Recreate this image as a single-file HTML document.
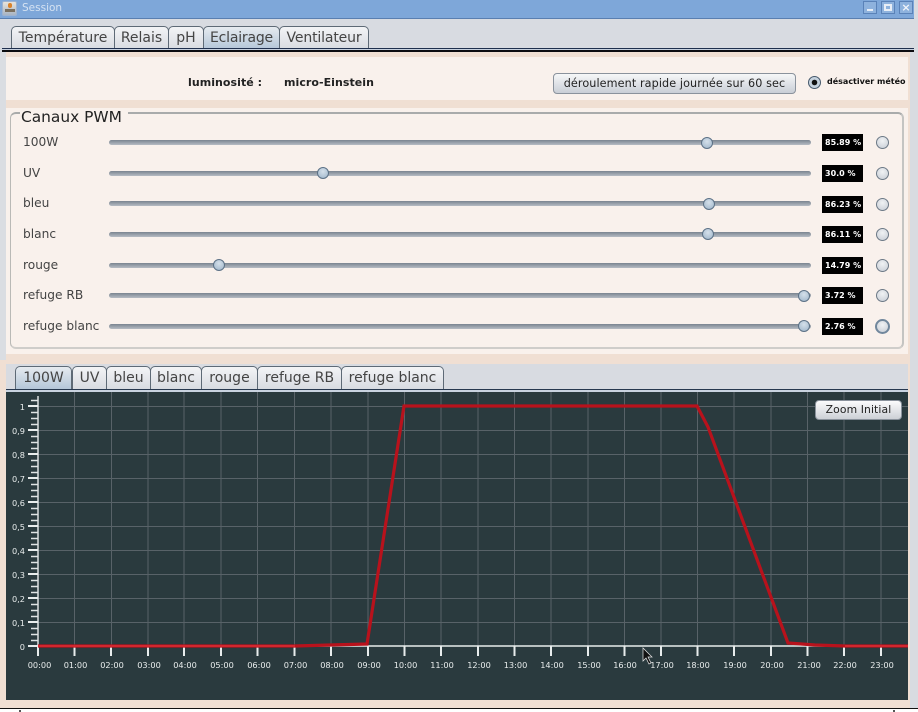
<!DOCTYPE html>
<html><head><meta charset="utf-8"><title>Session</title>
<style>
html,body{margin:0;padding:0;background:#fff}
#w{position:relative;width:918px;height:712px;overflow:hidden;background:#d8dbe1;font-family:"DejaVu Sans",sans-serif;color:#222}
#w div{position:absolute;box-sizing:border-box}
.tab{top:26px;height:23px;border:1px solid #5e6a76;border-bottom:none;border-radius:5px 5px 0 0;background:linear-gradient(#f3f4f6,#d8dbe1);font-size:14px;line-height:23px;text-align:center;color:#444;white-space:nowrap}
.sel{background:linear-gradient(#e6ebf0,#b4c6d8)}
.t2{top:366px}
.lab{left:23px;font-size:12.2px;line-height:14px;color:#444;white-space:nowrap}
.tr{left:109px;width:702px;height:5px;border-radius:3px;background:linear-gradient(#7a8490,#b6bcc3)}
.th{width:12px;height:12px;border-radius:50%;border:1px solid #5c7186;background:radial-gradient(circle at 50% 35%,#d5e0ea,#9db4c9)}
.v{left:822px;width:41px;height:17px;background:#000;color:#fff;font:bold 8px/18px "DejaVu Sans",sans-serif;padding-left:3px;white-space:nowrap}
.r{left:876px;width:13px;height:13px;border-radius:50%;border:1px solid #6c7986;background:radial-gradient(circle at 50% 35%,#f0f2f4,#c6ccd4)}
svg text{font-family:"DejaVu Sans",sans-serif;fill:#e8ecec;font-size:8.2px}
</style></head><body>
<div id="w">
<div style="left:0;top:0;width:918px;height:19px;background:#7ea7d9;border-bottom:1px solid #5a7fb0"></div>
<div style="left:2px;top:1px;width:15px;height:15px;background:linear-gradient(#e8e4dc,#a8b4c4);border-radius:2px;border:1px solid #9fb3cf"></div>
<div style="left:8px;top:3px;width:4px;height:5px;background:#d9822b;border-radius:2px"></div>
<div style="left:5px;top:9px;width:10px;height:3px;background:#7a7060"></div>
<div style="left:22px;top:1px;font-size:10.5px;line-height:14px;color:#d5e2f2">Session</div>
<div style="left:863px;top:1px;width:14px;height:13px;border:1px solid #5a82b8;background:#8eb2dd"></div>
<div style="left:867px;top:9px;width:6px;height:2px;background:#e8eef6"></div>
<div style="left:881px;top:1px;width:14px;height:13px;border:1px solid #5a82b8;background:#8eb2dd"></div>
<div style="left:884px;top:4px;width:8px;height:7px;border:2px solid #e8eef6"></div>
<div style="left:899px;top:1px;width:14px;height:13px;border:1px solid #5a82b8;background:#8eb2dd;color:#f2f5fa;font:bold 11px/12px 'DejaVu Sans',sans-serif;text-align:center">×</div>
<div style="left:914px;top:0;width:4px;height:712px;background:#d8dbe1"></div>

<div class="tab" style="left:11px;width:104px">Température</div>
<div class="tab" style="left:114px;width:55px">Relais</div>
<div class="tab" style="left:168px;width:36px">pH</div>
<div class="tab sel" style="left:203px;width:77px;letter-spacing:-.2px">Eclairage</div>
<div class="tab" style="left:279px;width:90px;letter-spacing:-.15px">Ventilateur</div>
<div style="left:2px;top:48px;width:912px;height:1px;background:#1f2f4d"></div>
<div style="left:2px;top:49px;width:912px;height:1px;background:#c8d2e0"></div>
<div style="left:2px;top:50px;width:912px;height:2px;background:#0c0c10"></div>

<div style="left:0;top:52px;width:6px;height:312px;background:#dadde2"></div>
<div style="left:6px;top:52px;width:904px;height:308px;background:#f0dfd3"></div>
<div style="left:6px;top:57px;width:902px;height:43px;background:#f9f1ec"></div>
<div style="left:6px;top:108px;width:902px;height:246px;background:#f9f1ec"></div>
<div style="left:188px;top:76px;font:bold 11px/14px 'DejaVu Sans',sans-serif;letter-spacing:.05px;color:#222;white-space:nowrap">luminosité :</div>
<div style="left:284px;top:76px;font:bold 11px/14px 'DejaVu Sans',sans-serif;letter-spacing:.05px;color:#222;white-space:nowrap">micro-Einstein</div>
<div style="left:553px;top:73px;width:243px;height:21px;border:1px solid #8a929c;border-radius:4px;background:linear-gradient(#f6f7f8,#c9ced6);font-size:11.2px;line-height:19px;text-align:center;letter-spacing:.1px;color:#222;white-space:nowrap">déroulement rapide journée sur 60 sec</div>
<div style="left:808px;top:76px;width:13px;height:13px;border-radius:50%;border:1px solid #46596c;background:radial-gradient(circle,#111 0 2.5px,#c5d2de 3px)"></div>
<div style="left:827px;top:76px;font:bold 8px/12px 'DejaVu Sans',sans-serif;color:#111;white-space:nowrap">désactiver météo</div>

<div style="left:10px;top:112px;width:894px;height:237px;border:1px solid #b9b9b6;border-top:2px solid #a9abab;border-right:2px solid #c4c4c2;border-bottom:2px solid #cfcdca;border-radius:6px"></div>
<div style="left:20px;top:108px;width:108px;height:17px;background:#f9f1ec;font-size:15.4px;line-height:18px;color:#222;padding-left:1px;white-space:nowrap">Canaux PWM</div>

<div class="lab" style="top:135px">100W</div>
<div class="lab" style="top:166px">UV</div>
<div class="lab" style="top:196px">bleu</div>
<div class="lab" style="top:227px">blanc</div>
<div class="lab" style="top:258px">rouge</div>
<div class="lab" style="top:288px">refuge RB</div>
<div class="lab" style="top:319px">refuge blanc</div>

<div class="tr" style="top:140px"></div><div class="th" style="left:701px;top:137px"></div>
<div class="tr" style="top:171px"></div><div class="th" style="left:317px;top:167px"></div>
<div class="tr" style="top:201px"></div><div class="th" style="left:703px;top:198px"></div>
<div class="tr" style="top:232px"></div><div class="th" style="left:702px;top:228px"></div>
<div class="tr" style="top:263px"></div><div class="th" style="left:213px;top:259px"></div>
<div class="tr" style="top:293px"></div><div class="th" style="left:798px;top:290px"></div>
<div class="tr" style="top:324px"></div><div class="th" style="left:798px;top:320px"></div>

<div class="v" style="top:134px">85.89 %</div><div class="r" style="top:136px"></div>
<div class="v" style="top:165px">30.0 %</div><div class="r" style="top:167px"></div>
<div class="v" style="top:196px">86.23 %</div><div class="r" style="top:198px"></div>
<div class="v" style="top:226px">86.11 %</div><div class="r" style="top:228px"></div>
<div class="v" style="top:257px">14.79 %</div><div class="r" style="top:259px"></div>
<div class="v" style="top:287px">3.72 %</div><div class="r" style="top:289px"></div>
<div class="v" style="top:318px">2.76 %</div><div class="r" style="top:319px;left:875px;width:15px;height:15px;border:2px solid #71879c"></div>

<div style="left:0;top:360px;width:6px;height:348px;background:#f0dfd3"></div>
<div style="left:6px;top:360px;width:904px;height:348px;background:#f0dfd3"></div>
<div style="left:6px;top:364px;width:902px;height:29px;background:#d8dbe1"></div>
<div class="tab t2 sel" style="left:15px;width:57px">100W</div>
<div class="tab t2" style="left:72px;width:35px">UV</div>
<div class="tab t2" style="left:106px;width:45px">bleu</div>
<div class="tab t2" style="left:150px;width:52px">blanc</div>
<div class="tab t2" style="left:201px;width:57px">rouge</div>
<div class="tab t2" style="left:257px;width:85px">refuge RB</div>
<div class="tab t2" style="left:341px;width:103px">refuge blanc</div>
<div style="left:6px;top:389px;width:902px;height:1px;background:#27384f"></div>
<div style="left:6px;top:390px;width:902px;height:2px;background:#c9d3e0"></div>

<svg style="position:absolute;left:0;top:0" width="918" height="712" viewBox="0 0 918 712">
<rect x="6" y="392" width="902" height="308" fill="#2a3a3e"/>
<g stroke="#586268" stroke-width="1">
<path d="M74.500 392V646M111.500 392V646M148 392V646M184 392V646M221 392V646M257.500 392V646M294.500 392V646M331 392V646M368 392V646M404.500 392V646M441 392V646M478 392V646M514.500 392V646M551 392V646M588 392V646M624.500 392V646M661 392V646M697.500 392V646M734 392V646M771 392V646M807.500 392V646M844 392V646M881 392V646"/>
<path d="M38 406.500H908M38 430.500H908M38 454.500H908M38 478.500H908M38 502.500H908M38 526.500H908M38 550.500H908M38 574.500H908M38 598.500H908M38 622.500H908"/>
</g>
<path d="M38 396V646H908" fill="none" stroke="#e8ecec" stroke-width="1.400"/>
<g stroke="#dfe4e4" stroke-width="1.400">
<path d="M31 400.500H38M31 412.500H38M31 418.500H38M31 424.500H38M31 436.500H38M31 442.500H38M31 448.500H38M31 460.500H38M31 466.500H38M31 472.500H38M31 484.500H38M31 490.500H38M31 496.500H38M31 508.500H38M31 514.500H38M31 520.500H38M31 532.500H38M31 538.500H38M31 544.500H38M31 556.500H38M31 562.500H38M31 568.500H38M31 580.500H38M31 586.500H38M31 592.500H38M31 604.500H38M31 610.500H38M31 616.500H38M31 628.500H38M31 634.500H38M31 640.500H38"/>
</g>
<g stroke="#e8ecec" stroke-width="2">
<path d="M28 406H38M28 430H38M28 454H38M28 478H38M28 502H38M28 526H38M28 550H38M28 574H38M28 598H38M28 622H38M28 646H38"/>
<path d="M38 646V656M74.500 646V656M111 646V656M148 646V656M184 646V656M221 646V656M257.500 646V656M294.500 646V656M331 646V656M368 646V656M404.500 646V656M441 646V656M478 646V656M514.500 646V656M551 646V656M588 646V656M624.500 646V656M661 646V656M697.500 646V656M734 646V656M771 646V656M807.500 646V656M844 646V656M881 646V656"/>
</g>
<g text-anchor="end">
<text x="25" y="410">1</text><text x="25" y="434">0,9</text><text x="25" y="458">0,8</text><text x="25" y="482">0,7</text><text x="25" y="506">0,6</text><text x="25" y="530">0,5</text><text x="25" y="554">0,4</text><text x="25" y="578">0,3</text><text x="25" y="602">0,2</text><text x="25" y="626">0,1</text><text x="25" y="650">0</text>
</g>
<g text-anchor="middle">
<text x="39.500" y="668">00:00</text><text x="75.500" y="668">01:00</text><text x="112" y="668">02:00</text><text x="149" y="668">03:00</text><text x="185" y="668">04:00</text><text x="222" y="668">05:00</text><text x="259" y="668">06:00</text><text x="295.500" y="668">07:00</text><text x="332" y="668">08:00</text><text x="369" y="668">09:00</text><text x="405.500" y="668">10:00</text><text x="442" y="668">11:00</text><text x="479" y="668">12:00</text><text x="515.500" y="668">13:00</text><text x="552" y="668">14:00</text><text x="589" y="668">15:00</text><text x="625" y="668">16:00</text><text x="662" y="668">17:00</text><text x="698" y="668">18:00</text><text x="735" y="668">19:00</text><text x="772" y="668">20:00</text><text x="809" y="668">21:00</text><text x="845" y="668">22:00</text><text x="882" y="668">23:00</text>
</g>
<polyline points="38,646 295,646 330,645 367,644 404,406 697,406 708,427 788,643 815,645 845,646 908,646" fill="none" stroke="#b8121c" stroke-width="3.200"/>
<path d="M38 646H295M845 646H908" stroke="#ee3a40" stroke-width="1"/>
<path d="M643 648V661L646 658L649 664L651 663L648 657L652 657Z" fill="#111" stroke="#e8e8e8" stroke-width=".7"/>
</svg>

<div style="left:815px;top:400px;width:87px;height:20px;border:1px solid #8a929c;border-radius:4px;background:linear-gradient(#fbfbfc,#ccd0d6);font-size:10.8px;line-height:18px;text-align:center;letter-spacing:.1px;color:#222;white-space:nowrap">Zoom Initial</div>

<div style="left:0;top:708px;width:918px;height:1px;background:#111"></div>
<div style="left:0;top:709px;width:918px;height:3px;background:#fff"></div>
<div style="left:19px;top:710px;width:2px;height:2px;background:#555"></div>
<div style="left:893px;top:710px;width:2px;height:2px;background:#555"></div>
</div>
</body></html>
